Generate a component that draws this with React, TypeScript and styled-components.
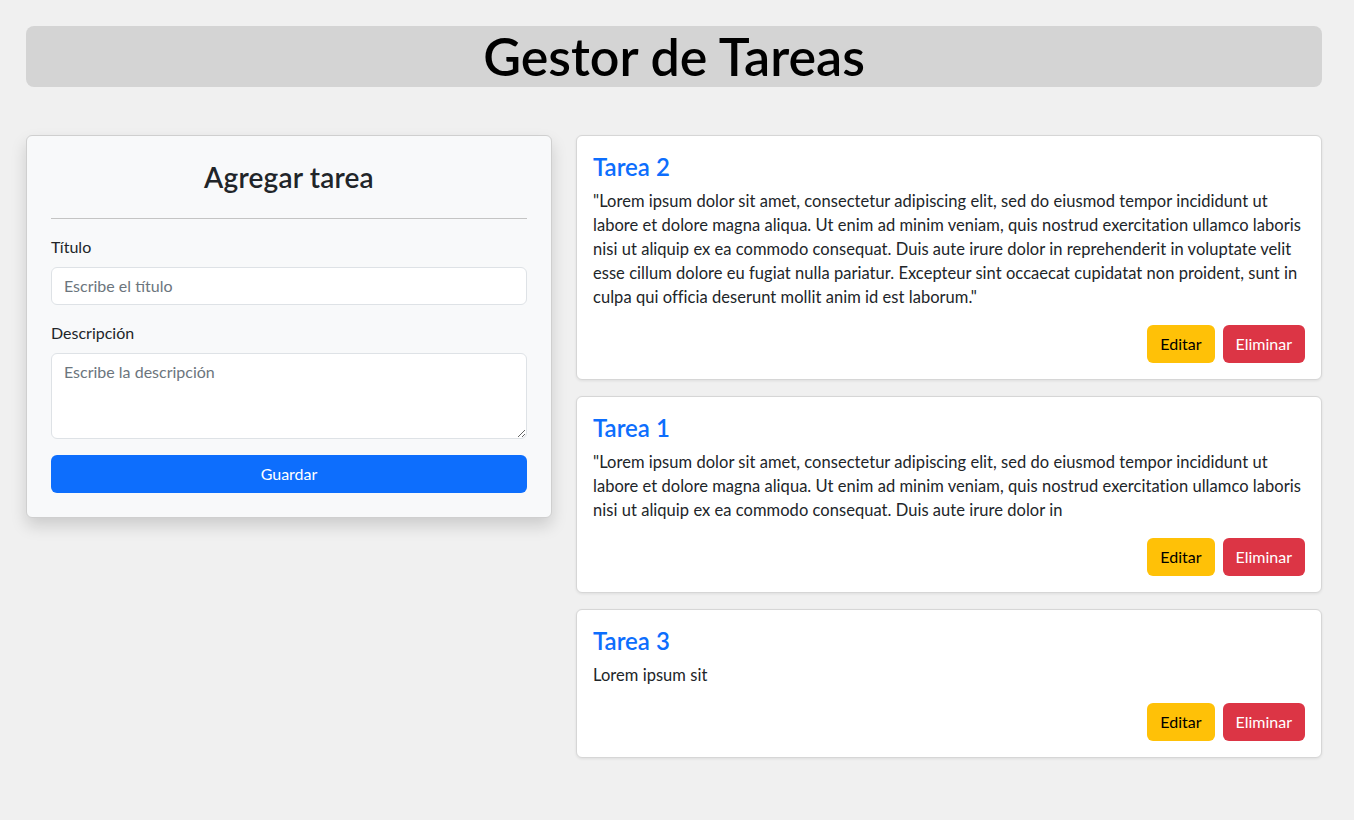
import React from 'react';
import styled, { createGlobalStyle } from 'styled-components';

const GlobalStyle = createGlobalStyle`
  * { box-sizing: border-box; }
  body {
    margin: 0;
    background: #f0f0f0;
    color: #212529;
    font-family: Lato, "Liberation Sans", sans-serif;
    font-size: 16px;
    line-height: 24px;
  }
`;

const Page = styled.div`
  padding: 26px 32px 40px 26px;
`;

const Header = styled.header`
  background: #d4d4d4;
  border-radius: 8px;
  height: 61px;
  display: flex;
  align-items: center;
  justify-content: center;
  margin-bottom: 48px;
`;

const Title = styled.h1`
  margin: 0;
  font-size: 52px;
  font-weight: 600;
  line-height: 61px;
  color: #000;
`;

const Columns = styled.div`
  display: grid;
  grid-template-columns: 526px 1fr;
  gap: 24px;
  align-items: start;
`;

const FormCard = styled.form`
  background: #f8f9fa;
  border: 1px solid #cfcfcf;
  border-radius: 6px;
  box-shadow: 0 8px 16px rgba(0, 0, 0, 0.15);
  padding: 24px;
  display: flex;
  flex-direction: column;
`;

const FormTitle = styled.h3`
  margin: 0 0 8px;
  padding-top: 1px;
  font-size: 28px;
  font-weight: 600;
  line-height: 1.2;
  text-align: center;
  letter-spacing: 0.2px;
`;

const Divider = styled.hr`
  width: 100%;
  border: 0;
  border-top: 1px solid #c4c4c4;
  margin: 15px 0 16px;
`;

const Label = styled.label`
  display: block;
  margin-bottom: 8px;
`;

const Field = styled.div`
  margin-bottom: 16px;
`;

const inputBase = `
  display: block;
  width: 100%;
  font: inherit;
  color: #212529;
  background: #fff;
  border: 1px solid #dee2e6;
  border-radius: 6px;
  padding: 6px 12px;
  &::placeholder { color: #6c757d; }
`;

const Input = styled.input`
  ${inputBase}
  height: 38px;
`;

const TextArea = styled.textarea`
  ${inputBase}
  height: 86px;
  resize: vertical;
`;

const Button = styled.button<{ $variant: 'primary' | 'warning' | 'danger' }>`
  font: inherit;
  height: 38px;
  padding: 6px 12px;
  border: 1px solid transparent;
  border-radius: 6px;
  cursor: pointer;
  background: ${(p) =>
    p.$variant === 'primary' ? '#0d6efd' : p.$variant === 'warning' ? '#ffc107' : '#dc3545'};
  color: ${(p) => (p.$variant === 'warning' ? '#000' : '#fff')};
`;

const FullButton = styled(Button)`
  width: 100%;
`;

const TaskList = styled.div`
  display: flex;
  flex-direction: column;
  gap: 16px;
`;

const TaskCard = styled.article`
  background: #fff;
  border: 1px solid #d6d6d6;
  border-radius: 6px;
  box-shadow: 0 1px 3px rgba(0, 0, 0, 0.08);
  padding: 16px;
`;

const TaskTitle = styled.h4`
  margin: 0 0 8px;
  padding-top: 1px;
  font-size: 24px;
  font-weight: 600;
  line-height: 28px;
  color: #0d6efd;
`;

const TaskText = styled.p`
  margin: 0 0 16px;
  font-size: 16.5px;
  letter-spacing: 0.04px;
`;

const Actions = styled.div`
  display: flex;
  justify-content: flex-end;
  gap: 8px;
`;

const lorem =
  '"Lorem ipsum dolor sit amet, consectetur adipiscing elit, sed do eiusmod tempor incididunt ut labore et dolore magna aliqua. Ut enim ad minim veniam, quis nostrud exercitation ullamco laboris nisi ut aliquip ex ea commodo consequat. Duis aute irure dolor in reprehenderit in voluptate velit esse cillum dolore eu fugiat nulla pariatur. Excepteur sint occaecat cupidatat non proident, sunt in culpa qui officia deserunt mollit anim id est laborum."';

const tasks = [
  { id: 2, title: 'Tarea 2', text: lorem },
  {
    id: 1,
    title: 'Tarea 1',
    text: '"Lorem ipsum dolor sit amet, consectetur adipiscing elit, sed do eiusmod tempor incididunt ut labore et dolore magna aliqua. Ut enim ad minim veniam, quis nostrud exercitation ullamco laboris nisi ut aliquip ex ea commodo consequat. Duis aute irure dolor in',
  },
  { id: 3, title: 'Tarea 3', text: 'Lorem ipsum sit' },
];

const App: React.FC = () => (
  <>
    <GlobalStyle />
    <Page>
      <Header>
        <Title>Gestor de Tareas</Title>
      </Header>
      <Columns>
        <FormCard onSubmit={(e) => e.preventDefault()}>
          <FormTitle>Agregar tarea</FormTitle>
          <Divider />
          <Field>
            <Label htmlFor="titulo">Título</Label>
            <Input id="titulo" placeholder="Escribe el título" />
          </Field>
          <Field>
            <Label htmlFor="descripcion">Descripción</Label>
            <TextArea id="descripcion" placeholder="Escribe la descripción" />
          </Field>
          <FullButton type="submit" $variant="primary">
            Guardar
          </FullButton>
        </FormCard>
        <TaskList>
          {tasks.map((t) => (
            <TaskCard key={t.id}>
              <TaskTitle>{t.title}</TaskTitle>
              <TaskText>{t.text}</TaskText>
              <Actions>
                <Button $variant="warning">Editar</Button>
                <Button $variant="danger">Eliminar</Button>
              </Actions>
            </TaskCard>
          ))}
        </TaskList>
      </Columns>
    </Page>
  </>
);

export default App;
